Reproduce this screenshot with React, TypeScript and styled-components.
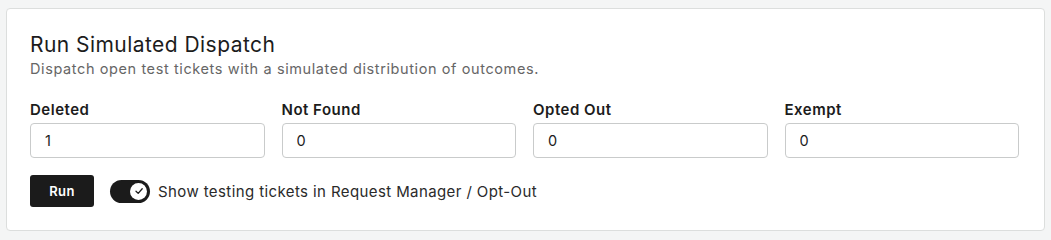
import React, { useState } from 'react';
import styled, { createGlobalStyle } from 'styled-components';

const GlobalStyle = createGlobalStyle`
   html, body {
      margin: 0;
      padding: 0;
      background: #f4f5f5;
      font-family: 'Inter', 'Liberation Sans', sans-serif;
      color: #1c1c1c;
   }
   * {
      box-sizing: border-box;
   }
`;

const StyledPage = styled.div`
   padding: 8px 6px 8px 6px;
`;

const StyledCard = styled.section`
   background: #fff;
   border: 1px solid #dcdedd;
   border-radius: 4px;
   padding: 24px 25px 23px 23px;
   display: flex;
   flex-direction: column;
`;

const StyledTitle = styled.h2`
   margin: 0;
   font-size: 21px;
   line-height: 24px;
   font-weight: 400;
   color: #1c1c1c;
   letter-spacing: 0.45px;
`;

const StyledSubtitle = styled.p`
   margin: 2px 0 0;
   font-size: 14.5px;
   line-height: 20px;
   color: #666;
   letter-spacing: 0.6px;
`;

const StyledFields = styled.div`
   display: grid;
   grid-template-columns: repeat(4, 1fr);
   gap: 17px;
   margin-top: 21px;
`;

const StyledField = styled.label`
   display: flex;
   flex-direction: column;
   gap: 3px;
`;

const StyledLabel = styled.span`
   font-size: 15px;
   line-height: 20px;
   font-weight: 600;
   color: #1c1c1c;
   letter-spacing: 0.5px;
`;

const StyledInput = styled.input`
   height: 35px;
   width: 100%;
   border: 1px solid #c9cbcb;
   border-radius: 4px;
   padding: 0 14px;
   font-family: inherit;
   font-size: 14.5px;
   color: #1c1c1c;
   background: #fff;
   outline: none;
`;

const StyledActions = styled.div`
   display: flex;
   align-items: center;
   margin-top: 17px;
   gap: 16px;
`;

const StyledRunButton = styled.button`
   height: 32px;
   width: 64px;
   border: none;
   border-radius: 3px;
   background: #1b1b1b;
   color: #fff;
   font-family: inherit;
   font-size: 13px;
   font-weight: 600;
   letter-spacing: 0.3px;
   cursor: pointer;
`;

const StyledToggleRow = styled.label`
   display: flex;
   align-items: center;
   gap: 8px;
   font-size: 15px;
   color: #2a2a2a;
   letter-spacing: 0.4px;
   cursor: pointer;
`;

const StyledTrack = styled.span<{ $on: boolean }>`
   position: relative;
   width: 40px;
   height: 23px;
   border-radius: 12px;
   background: ${(p) => (p.$on ? '#1b1b1b' : '#cfd1d1')};
   flex-shrink: 0;
`;

const StyledKnob = styled.span<{ $on: boolean }>`
   position: absolute;
   top: 3px;
   left: ${(p) => (p.$on ? '20px' : '3px')};
   width: 17px;
   height: 17px;
   border-radius: 50%;
   background: #fff;
   display: flex;
   align-items: center;
   justify-content: center;
`;

const fields = [
   { label: 'Deleted', value: '1' },
   { label: 'Not Found', value: '0' },
   { label: 'Opted Out', value: '0' },
   { label: 'Exempt', value: '0' },
];

export default function App() {
   const [showTesting, setShowTesting] = useState(true);

   return (
      <>
         <GlobalStyle />
         <StyledPage>
            <StyledCard>
               <StyledTitle>Run Simulated Dispatch</StyledTitle>
               <StyledSubtitle>Dispatch open test tickets with a simulated distribution of outcomes.</StyledSubtitle>
               <StyledFields>
                  {fields.map((f) => (
                     <StyledField key={f.label}>
                        <StyledLabel>{f.label}</StyledLabel>
                        <StyledInput defaultValue={f.value} />
                     </StyledField>
                  ))}
               </StyledFields>
               <StyledActions>
                  <StyledRunButton>Run</StyledRunButton>
                  <StyledToggleRow onClick={() => setShowTesting((prev) => !prev)}>
                     <StyledTrack $on={showTesting}>
                        <StyledKnob $on={showTesting}>
                           {showTesting && (
                              <svg width="10" height="10" viewBox="0 0 10 10" fill="none">
                                 <path d="M2 5.2 L4.2 7.4 L8.2 2.8" stroke="#1b1b1b" strokeWidth="1.3" strokeLinecap="round" strokeLinejoin="round" />
                              </svg>
                           )}
                        </StyledKnob>
                     </StyledTrack>
                     Show testing tickets in Request Manager / Opt-Out
                  </StyledToggleRow>
               </StyledActions>
            </StyledCard>
         </StyledPage>
      </>
   );
}
